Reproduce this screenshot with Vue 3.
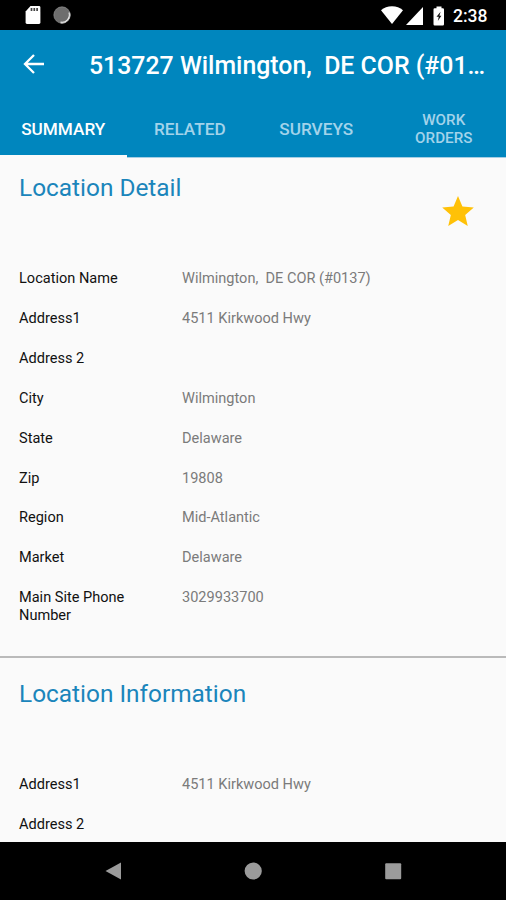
<script setup>
import { ref } from 'vue'

const title = '513727 Wilmington,  DE COR (#01…'

const tabs = ['Summary', 'Related', 'Surveys', 'Work Orders']
const activeTab = ref(0)
const favorite = ref(true)

const sections = ref([
  {
    title: 'Location Detail',
    star: true,
    fields: [
      { label: 'Location Name', value: 'Wilmington,  DE COR (#0137)' },
      { label: 'Address1', value: '4511 Kirkwood Hwy' },
      { label: 'Address 2', value: '' },
      { label: 'City', value: 'Wilmington' },
      { label: 'State', value: 'Delaware' },
      { label: 'Zip', value: '19808' },
      { label: 'Region', value: 'Mid-Atlantic' },
      { label: 'Market', value: 'Delaware' },
      { label: 'Main Site Phone Number', value: '3029933700' }
    ]
  },
  {
    title: 'Location Information',
    star: false,
    fields: [
      { label: 'Address1', value: '4511 Kirkwood Hwy' },
      { label: 'Address 2', value: '' }
    ]
  }
])
</script>

<template>
  <div class="screen">
    <div class="status">
      <svg class="sd" viewBox="0 0 16 20">
        <path d="M5.5 1H14a1.4 1.4 0 0 1 1.4 1.4v15.2A1.4 1.4 0 0 1 14 19H2a1.4 1.4 0 0 1-1.4-1.4V6.5z" fill="#fff" />
        <path d="M6.5 3v3M9.3 3v3M12.1 3v3" stroke="#444" stroke-width="1.7" />
      </svg>
      <svg class="sync" viewBox="0 0 18 18">
        <circle cx="9" cy="9" r="8.2" fill="#6e6e6e" />
        <path d="M16.2 6.5A7.6 7.6 0 0 1 7.5 16.4" fill="none" stroke="#eee" stroke-width="1.6" />
        <circle cx="9" cy="9" r="8.2" fill="none" stroke="#999" stroke-width="0.6" />
      </svg>
      <span class="spacer"></span>
      <svg class="wifi" viewBox="0 0 22 18">
        <path d="M11 18 0 4.2C3 1.7 6.7 0.3 11 0.3s8 1.4 11 3.9z" fill="#fff" />
      </svg>
      <svg class="signal" viewBox="0 0 17 18">
        <path d="M17 0v18H0z" fill="#fff" />
      </svg>
      <svg class="battery" viewBox="0 0 12 20">
        <path d="M3.5 2.2V.5h5v1.7h1.3A1.2 1.2 0 0 1 11 3.4v14.9a1.2 1.2 0 0 1-1.2 1.2H1.7a1.2 1.2 0 0 1-1.2-1.2V3.4a1.2 1.2 0 0 1 1.2-1.2z" fill="#fff" />
        <path d="M7.6 5.8 3.5 10.8h2.3L4.8 15l3.6-5.3H6.4z" fill="#111" />
      </svg>
      <span class="time">2:38</span>
    </div>

    <div class="toolbar">
      <svg class="back" viewBox="0 0 22 20">
        <path d="M11 1 2 10l9 9M2 10h19" fill="none" stroke="#fff" stroke-width="2.3" />
      </svg>
      <h1>{{ title }}</h1>
    </div>

    <div class="tabs">
      <button v-for="(tab, i) in tabs" :key="i" :class="{ active: activeTab === i, small: tab.includes(' ') }" @click="activeTab = i">
        {{ tab }}
      </button>
    </div>

    <div class="content">
      <div v-for="section in sections" :key="section.title" class="section">
        <div class="heading">
          <h2>{{ section.title }}</h2>
          <svg v-if="section.star" class="star" viewBox="2 2 20 19" @click="favorite = !favorite">
            <path :fill="favorite ? '#ffc107' : '#bdbdbd'" d="M12 17.27 18.18 21l-1.64-7.03L22 9.24l-7.19-.61L12 2 9.19 8.63 2 9.24l5.46 4.73L5.82 21z" />
          </svg>
        </div>
        <div v-for="(field, i) in section.fields" :key="i" class="field">
          <span class="label">{{ field.label }}</span>
          <span class="value">{{ field.value }}</span>
        </div>
      </div>
    </div>

    <div class="navbar">
      <svg viewBox="0 0 18 18"><path d="M17 .5v17L1.500 9z" fill="#9b9b9b" /></svg>
      <svg viewBox="0 0 18 18"><circle cx="9.2" cy="9" r="8.6" fill="#9b9b9b" /></svg>
      <svg viewBox="0 0 18 18"><rect x="1.2" y="1.2" width="16" height="16" rx="1" fill="#9b9b9b" /></svg>
    </div>
  </div>
</template>

<style>
body {
  margin: 0;
  background: #000;
}
</style>

<style scoped>
.screen {
  width: 506px;
  height: 900px;
  display: flex;
  flex-direction: column;
  overflow: hidden;
  background: #fafafa;
  font-family: Roboto, sans-serif;
}

.status {
  height: 30px;
  flex: none;
  display: flex;
  align-items: center;
  box-sizing: border-box;
  padding: 0 18px 0 25px;
  background: #000;
}

.sd {
  width: 16px;
  height: 20px;
}

.sync {
  width: 18px;
  height: 18px;
  margin-left: 12px;
}

.spacer {
  flex: 1;
}

.wifi {
  width: 22px;
  height: 18px;
}

.signal {
  width: 17px;
  height: 18px;
  margin: 1px 0 0 3px;
}

.battery {
  width: 12px;
  height: 20px;
  margin: 1px 8px 0 10px;
}

.time {
  width: 35px;
  margin-top: 2px;
  color: #fff;
  font-size: 17.5px;
  font-weight: 500;
  white-space: nowrap;
}

.toolbar {
  height: 71px;
  flex: none;
  display: flex;
  align-items: center;
  box-sizing: border-box;
  padding-left: 23px;
  background: #0086be;
}

.back {
  width: 22px;
  height: 20px;
  margin-top: -3px;
}

h1 {
  margin: 1px 0 0 44px;
  color: #fff;
  font-size: 24.85px;
  font-weight: 500;
  line-height: 30px;
  white-space: pre;
}

.tabs {
  height: 57px;
  flex: none;
  display: grid;
  grid-template-columns: repeat(4, minmax(0, 1fr));
  box-sizing: border-box;
  background: #0086be;
  border-bottom: 1px solid #a5cee4;
}

.tabs button {
  height: 57px;
  box-sizing: border-box;
  padding: 2px 20px 0;
  border: 0;
  border-bottom: 3px solid transparent;
  background: none;
  color: #a3d3ea;
  font-family: inherit;
  font-size: 17.2px;
  font-weight: 500;
  line-height: 18px;
  text-transform: uppercase;
}

.tabs button.small {
  padding-left: 22px;
  font-size: 15.2px;
}

.tabs button.active {
  border-bottom-color: #fafafa;
  color: #fff;
}

.content {
  flex: 1;
  min-height: 0;
  overflow: hidden;
}

.section {
  padding: 0 19px 21px;
}

.section + .section {
  border-top: 2px solid #bababa;
}

.heading {
  height: 101px;
  display: flex;
  justify-content: space-between;
  align-items: flex-start;
}

.section + .section .heading {
  height: 106.4px;
}

h2 {
  margin: 15px 0 0;
  color: #1b85bb;
  font-size: 24.4px;
  font-weight: 400;
  line-height: 30px;
}

.section + .section h2 {
  margin-top: 21px;
}

.star {
  width: 32px;
  height: 30px;
  margin: 38px 13px 0 0;
}

.field {
  display: flex;
  padding: 11.2px 0;
  font-size: 14.55px;
  line-height: 17.5px;
}

.label {
  width: 133px;
  margin-right: 30px;
  color: #111;
}

.value {
  flex: 1;
  color: #7b7b7b;
  white-space: pre;
}

.navbar {
  height: 58px;
  flex: none;
  display: flex;
  justify-content: space-between;
  align-items: center;
  box-sizing: border-box;
  padding: 0 104px;
  background: #000;
}

.navbar svg {
  width: 18px;
  height: 18px;
}
</style>
